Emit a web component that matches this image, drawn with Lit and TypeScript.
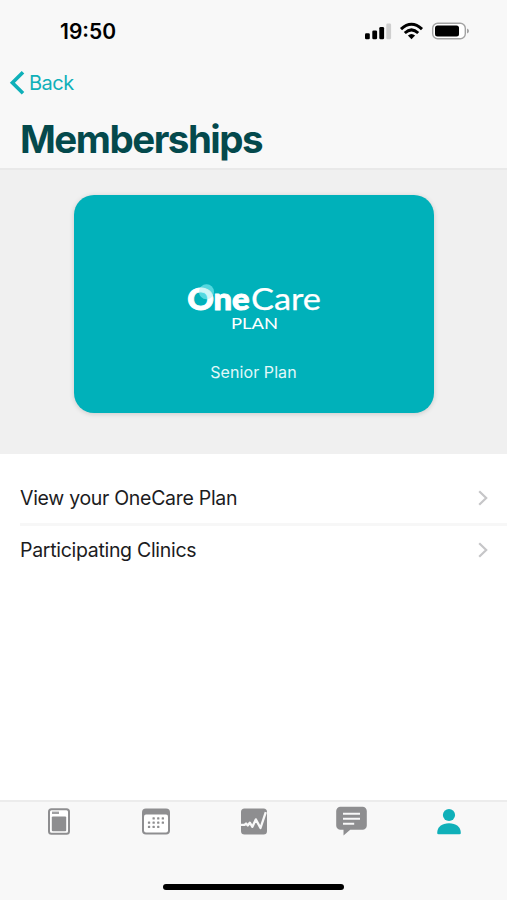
import { LitElement, html, css, svg } from "lit";
import { customElement } from "lit/decorators.js";

const chevron = html`<svg class="chev" width="10" height="16" viewBox="0 0 10 16"><path d="M1.2 1.2 8.2 8 1.2 14.8" /></svg>`;

const dots = [
  [11.7, 11], [16.3, 11], [20.9, 11],
  [7.1, 15.3], [11.7, 15.3], [16.3, 15.3], [20.9, 15.3],
  [7.1, 19.6], [11.7, 19.6], [16.3, 19.6],
];

@customElement("app-root")
export class AppRoot extends LitElement {
  static styles = css`
    :host {
      display: flex;
      flex-direction: column;
      box-sizing: border-box;
      width: 100%;
      height: 900px;
      overflow: hidden;
      background: #fff;
      color: #1c1c1e;
      font-family: Inter, "Liberation Sans", sans-serif;
    }
    svg { display: block; overflow: visible; }
    .head {
      box-sizing: border-box;
      height: 170px;
      background: #f8f8f8;
      border-bottom: 2px solid #e9e9e9;
      display: flex;
      flex-direction: column;
    }
    .status {
      height: 62px;
      display: flex;
      align-items: center;
      justify-content: space-between;
      padding: 0 38px 0 60px;
    }
    .time { font-size: 21px; font-weight: 600; color: #000; letter-spacing: 0; }
    .back {
      height: 42px;
      display: flex;
      align-items: center;
      padding-left: 10px;
      gap: 5px;
      color: #0fb0b9;
      font-size: 20px;
      letter-spacing: -0.5px;
    }
    .back path { fill: none; stroke: #0fb0b9; stroke-width: 3.6; }
    h1 {
      margin: 0;
      padding-left: 20px;
      line-height: 71px;
      height: 64px;
      font-size: 38.5px;
      font-weight: 700;
      letter-spacing: -1.5px;
      color: #04494c;
      white-space: nowrap;
    }
    .hero {
      height: 284px;
      box-sizing: border-box;
      background: #f0f0f0;
      display: flex;
      justify-content: center;
      padding-top: 25px;
    }
    .card {
      width: 360px;
      height: 217.5px;
      border-radius: 20px;
      background: #00b1ba;
      box-shadow: 0 1px 5px rgba(0, 0, 0, 0.16);
      display: flex;
      flex-direction: column;
      align-items: center;
      color: #fff;
    }
    .logo { margin-top: 85px; font-family: Lato, sans-serif; fill: #fff; }
    .one { stroke: #fff; stroke-width: 0.9; }
    .thin { stroke: #fff; stroke-width: 0.25; }
    .plan { margin-top: 32px; line-height: 20px; font-size: 16px; letter-spacing: 0.08px; color: #e3f8f9; }
    .list { flex: 1; padding-top: 18px; }
    .row {
      display: flex;
      align-items: center;
      justify-content: space-between;
      height: 51px;
      margin-left: 20px;
      padding-right: 19px;
      font-size: 19.5px;
      letter-spacing: -0.3px;
    }
    .row + .row { border-top: 3px solid #f7f7f7; height: 48px; }
    .chev path { fill: none; stroke: #c6c6c8; stroke-width: 2.2; }
    .tabs {
      height: 100px;
      box-sizing: border-box;
      border-top: 2px solid #ececec;
      background: #f8f8f8;
      display: flex;
      flex-direction: column;
      align-items: center;
      justify-content: space-between;
      padding-bottom: 10px;
    }
    .icons {
      width: 100%;
      box-sizing: border-box;
      padding: 4px 9px 0 10px;
      display: grid;
      grid-template-columns: repeat(5, 1fr);
      justify-items: center;
    }
    .home { width: 181px; height: 6px; border-radius: 3px; background: #000; }
  `;

  render() {
    return html`
      <header class="head">
        <div class="status">
          <span class="time">19:50</span>
          <svg width="104" height="20" viewBox="0 0 104 20">
            <rect x="0" y="12.2" width="4.8" height="6" rx="1.3" />
            <rect x="7.3" y="9.5" width="4.8" height="8.7" rx="1.3" />
            <rect x="14.3" y="6" width="4.8" height="12.2" rx="1.3" />
            <rect x="21.3" y="2.5" width="4.8" height="15.7" rx="1.3" fill="#cfcfcf" />
            <g fill="none" stroke="#000" stroke-width="3">
              <path d="M36 8.2Q46.5-1.6 57 8.2" />
              <path d="M39.8 12Q46.5 5.8 53.2 12" />
            </g>
            <path d="M42.9 14.5Q46.5 11.4 50.1 14.5L46.5 18.2Z" />
            <rect x="67.7" y="2.2" width="32.6" height="15.6" rx="5" fill="#fff" stroke="#a3a3a3" stroke-width="1.4" />
            <rect x="70" y="4.5" width="24" height="11" rx="2.5" />
            <path d="M102 7.5q2 .8 2 2.5t-2 2.5z" fill="#a3a3a3" />
          </svg>
        </div>
        <div class="back">
          <svg width="14" height="24" viewBox="0 0 14 24"><path d="M13 1.2 2.4 11.7 13 22.2" /></svg>
          <span>Back</span>
        </div>
        <h1>Memberships</h1>
      </header>
      <section class="hero">
        <div class="card">
          <svg class="logo" width="136" height="50" viewBox="0 0 136 50">
            <circle cx="20.5" cy="11.8" r="7.5" fill="#4fd6dd" />
            <text class="one" x="1.2" y="29.6" font-size="30.5" font-weight="900" textLength="62.5" lengthAdjust="spacingAndGlyphs">One</text>
            <circle cx="20.5" cy="11.8" r="7.5" fill="#5fdde4" opacity="0.3" />
            <text class="thin" x="65" y="29.6" font-size="30.5" font-weight="400" textLength="70" lengthAdjust="spacingAndGlyphs">Care</text>
            <text x="45" y="48.7" font-size="15.5" textLength="47" lengthAdjust="spacingAndGlyphs">PLAN</text>
          </svg>
          <div class="plan">Senior Plan</div>
        </div>
      </section>
      <main class="list">
        <div class="row"><span>View your OneCare Plan</span>${chevron}</div>
        <div class="row"><span>Participating Clinics</span>${chevron}</div>
      </main>
      <nav class="tabs">
        <div class="icons">
          <svg width="22" height="32" viewBox="0 0 22 32">
            <rect x="1" y="3.2" width="20" height="24.6" rx="2.5" fill="#fff" stroke="#8e8e90" stroke-width="2" />
            <rect x="3.8" y="10.5" width="14.4" height="14.8" rx="1" fill="#8e8e90" />
            <rect x="4" y="5.6" width="7" height="2.4" fill="#a0a0a2" />
          </svg>
          <svg width="28" height="32" viewBox="0 0 28 32">
            <rect x="0" y="2.4" width="28" height="26" rx="4" fill="#8e8e90" />
            <rect x="2" y="8.5" width="24" height="18" rx="2" fill="#fff" />
            ${dots.map(([x, y]) => svg`<rect x=${x - 1.2} y=${y + 0.2} width="2.3" height="2.3" rx="0.6" fill="#8e8e90" />`)}
          </svg>
          <svg width="26" height="32" viewBox="0 0 26 32">
            <rect x="0" y="2.4" width="26" height="26" rx="3.5" fill="#8e8e90" />
            <path d="M0 18.8H3.5L5 17.5 6.8 19.5 8.8 16.6 11.4 20.8 14.8 13.4 19.5 22 24.8 6.2" fill="none" stroke="#f8f8f8" stroke-width="2.3" stroke-linejoin="round" />
          </svg>
          <svg width="31" height="32" viewBox="0 0 31 32">
            <path d="M4.5.8h22a4.3 4.3 0 0 1 4.3 4.3v14.4a4.3 4.3 0 0 1-4.3 4.3H14.2L7.5 29.6V23.8h-3A4.3 4.3 0 0 1 .2 19.5V5.1A4.3 4.3 0 0 1 4.5.8Z" fill="#8e8e90" />
            <path d="M7 7.8h17M7 12.8h17M7 17.8h11.2" stroke="#f8f8f8" stroke-width="2" />
          </svg>
          <svg width="24" height="32" viewBox="0 0 24 32" fill="#0fb0b9">
            <circle cx="12" cy="9" r="6.1" />
            <path d="M.2 27C.2 20.6 5 17.2 12 17.2S23.8 20.6 23.8 27q0 1.3-1.3 1.3h-21Q.2 28.3 .2 27Z" />
          </svg>
        </div>
        <div class="home"></div>
      </nav>
    `;
  }
}
